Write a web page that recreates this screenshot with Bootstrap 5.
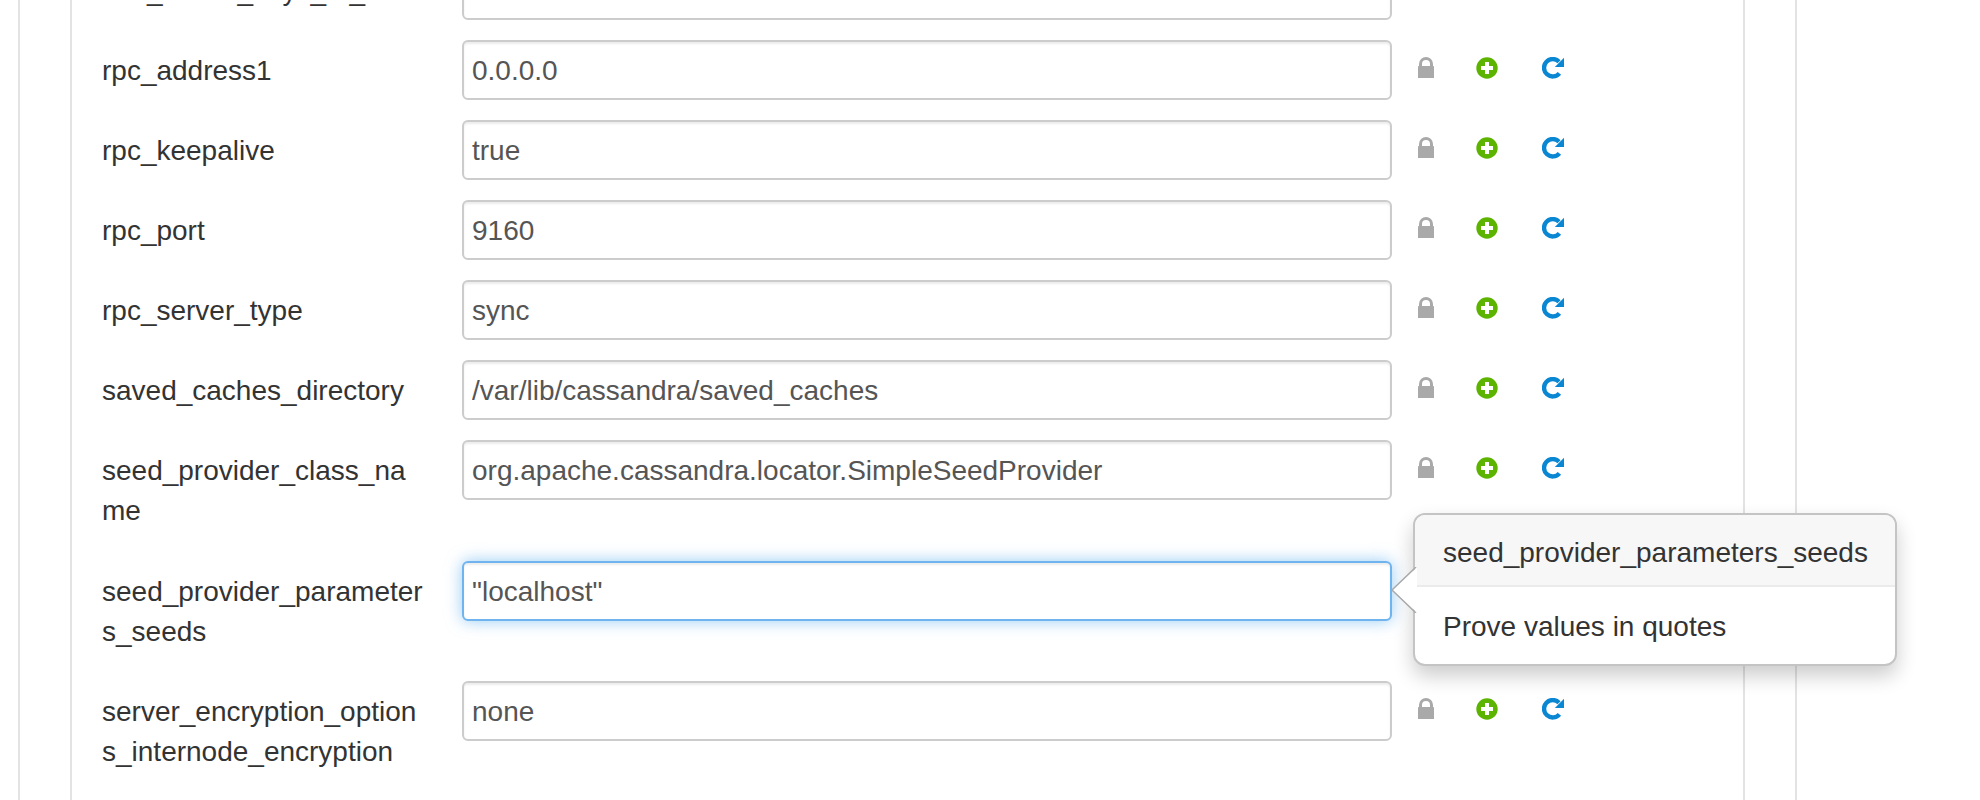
<!DOCTYPE html>
<html lang="en">
<head>
<meta charset="utf-8">
<title>Configuration</title>
<link href="https://cdn.jsdelivr.net/npm/bootstrap@5.3.0/dist/css/bootstrap.min.css" rel="stylesheet">
<style>
html,body{height:800px;overflow:hidden;background:#fff}
body{font-family:"Liberation Sans",Arial,sans-serif;font-size:28px;line-height:40px;color:#333}
.outer-frame{margin-left:18px;width:1779px;height:900px;border:solid #e3e3e3;border-width:0 2px;padding:0 50px;margin-top:-40px}
.inner-frame{height:900px;border:solid #e3e3e3;border-width:0 2px;padding:0 0 0 30px}
.cfg-row{display:flex;align-items:flex-start;margin-bottom:20px;position:relative}
.cfg-label{width:360px;flex:none;padding:11px 39px 9px 0;margin:0;word-break:break-all;font-size:28px;line-height:40px;color:#333}
.cfg-label.lbl-tall{padding-bottom:10px}
.cfg-input.form-control{width:930px;flex:none;height:60px;padding:9px 8px 7px;font-size:28px;line-height:40px;color:#555;border:2px solid #ccc;border-radius:6px;box-shadow:inset 0 2px 2px rgba(0,0,0,.075);background:#fff;font-family:"Liberation Sans",Arial,sans-serif}
.cfg-input.is-focus{border-color:#6fb4ee;box-shadow:inset 0 2px 2px rgba(0,0,0,.075),0 0 16px rgba(82,168,236,.6)}
.cfg-icons{display:flex;align-items:flex-start;padding-top:17px}
.ic-lock{width:16px;height:21px;margin-left:26px}
.ic-plus{width:22px;height:22px;margin-left:42px}
.ic-redo{width:22px;height:22px;margin-left:44px}
.popover.cfg-pop{--bs-popover-max-width:none;display:block;position:absolute;left:1311px;top:-48px;width:484px;height:153px;max-width:none;background:#fff;border:2px solid #c4c4c4;border-radius:12px;box-shadow:0 10px 20px rgba(0,0,0,.2);font-family:"Liberation Sans",Arial,sans-serif;color:#333}
.cfg-pop .popover-header{height:72px;margin:0;padding:3px 20px 0 28px;white-space:nowrap;background:#f7f7f7;border-bottom:2px solid #ebebeb;border-radius:10px 10px 0 0;font-size:28px;line-height:70px;font-weight:400;color:#333}
.cfg-pop .popover-body{padding:0 28px;font-size:28px;line-height:80px;color:#333}
.cfg-arrow{position:absolute;left:-25px;top:52px;width:27px;height:46px}
</style>
</head>
<body>
<div class="outer-frame">
<div class="inner-frame">
<form id="cfg"></form>
</div>
</div>
<svg width="0" height="0" class="d-block position-absolute">
<defs>
<symbol id="s-lock" viewBox="0 0 16 21"><path fill="#a9a9a9" fill-rule="evenodd" d="M1 9V7a7 7 0 0 1 14 0v2h.2a.8.8 0 0 1 .8.8V21H0V9.8A.8.8 0 0 1 .8 9ZM4 9h8V7a4 4 0 0 0-8 0Z"/></symbol>
<symbol id="s-plus" viewBox="0 0 22 22"><circle cx="11" cy="11" r="10.7" fill="#5cb400"/><path fill="#fff" d="M9 5h4v4h4v4h-4v4H9v-4H5V9h4Z"/></symbol>
<symbol id="s-redo" viewBox="0 0 22 22"><path fill="none" stroke="#0a87d3" stroke-width="4.4" d="M17.4 16.3A8.7 8.7 0 1 1 17 4.7"/><path fill="#0a87d3" d="M22 .8V10h-9.2Z"/></symbol>
</defs>
</svg>
<script>
var rows=[["row_cache_keys_to_save","0"],["rpc_address1","0.0.0.0"],["rpc_keepalive","true"],["rpc_port","9160"],["rpc_server_type","sync"],["saved_caches_directory","/var/lib/cassandra/saved_caches"],["seed_provider_class_name","org.apache.cassandra.locator.SimpleSeedProvider"],["seed_provider_parameters_seeds","\"localhost\""],["server_encryption_options_internode_encryption","none"]];
var h="";
rows.forEach(function(r,i){
 var f=i===7;
 h+='<div class="cfg-row"><label class="cfg-label'+(i===0?' text-nowrap':'')+(i===6?' lbl-tall':'')+'">'+r[0]+'</label><input class="form-control cfg-input'+(f?' is-focus':'')+'" value="'+r[1].replace(/"/g,'&quot;')+'">'+
 '<div class="cfg-icons"><svg class="ic-lock"><use href="#s-lock"/></svg><svg class="ic-plus"><use href="#s-plus"/></svg><svg class="ic-redo"><use href="#s-redo"/></svg></div>';
 if(f)h+='<div class="popover cfg-pop"><svg class="cfg-arrow" viewBox="0 0 27 46"><path d="M27 .5 2 23l25 22.5Z" fill="#fff"/><path d="M26 0 2 23l24 23" fill="none" stroke="#aaa" stroke-width="1.5"/></svg><h3 class="popover-header">seed_provider_parameters_seeds</h3><div class="popover-body">Prove values in quotes</div></div>';
 h+='</div>';
});
document.getElementById("cfg").innerHTML=h;
</script>
<script src="https://cdn.jsdelivr.net/npm/bootstrap@5.3.0/dist/js/bootstrap.bundle.min.js"></script>
</body>
</html>
